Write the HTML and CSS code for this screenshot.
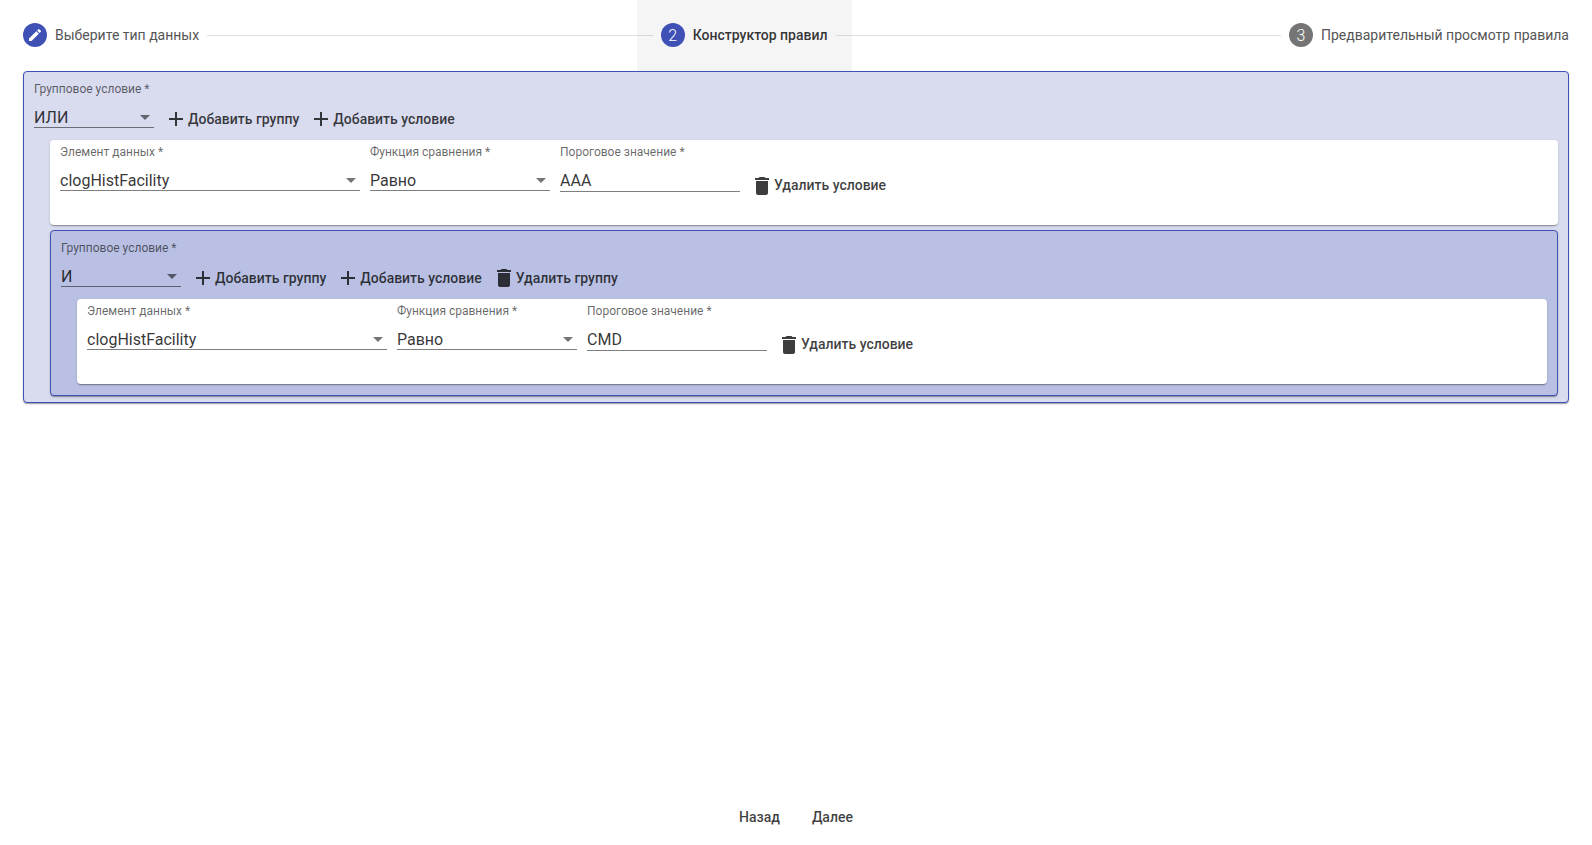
FILE: index.html
```html
<!DOCTYPE html>
<html lang="ru">
<head>
<meta charset="utf-8">
<title>Конструктор правил</title>
<link rel="stylesheet" href="styles.css">
</head>
<body>
<div class="page">
  <header class="stepper">
    <div class="step">
      <span class="step-icon"><svg viewBox="0 0 24 24" class="pencil"><path d="M3 17.25V21h3.75L17.81 9.94l-3.75-3.75L3 17.25zM20.71 7.04a1 1 0 0 0 0-1.41l-2.34-2.34a1 1 0 0 0-1.41 0l-1.83 1.83 3.75 3.75 1.83-1.83z"/></svg></span>
      <span class="step-label">Выберите тип данных</span>
    </div>
    <div class="step-line"></div>
    <div class="step step-active">
      <span class="step-icon">2</span>
      <span class="step-label step-label-strong">Конструктор правил</span>
    </div>
    <div class="step-line"></div>
    <div class="step">
      <span class="step-icon step-icon-idle">3</span>
      <span class="step-label">Предварительный просмотр правила</span>
    </div>
  </header>

  <main class="content">
    <section class="group group-outer">
      <div class="group-head">
        <div class="field field-group">
          <span class="field-label">Групповое условие *</span>
          <div class="field-value"><span>ИЛИ</span><i class="arrow"></i></div>
        </div>
        <button class="action"><svg viewBox="0 0 24 24" class="icon"><path d="M19 13h-6v6h-2v-6H5v-2h6V5h2v6h6v2z"/></svg>Добавить группу</button>
        <button class="action"><svg viewBox="0 0 24 24" class="icon"><path d="M19 13h-6v6h-2v-6H5v-2h6V5h2v6h6v2z"/></svg>Добавить условие</button>
      </div>
      <div class="group-body">
        <div class="rule">
          <div class="field field-wide">
            <span class="field-label">Элемент данных *</span>
            <div class="field-value"><span>clogHistFacility</span><i class="arrow"></i></div>
          </div>
          <div class="field field-mid">
            <span class="field-label">Функция сравнения *</span>
            <div class="field-value"><span>Равно</span><i class="arrow"></i></div>
          </div>
          <div class="field field-mid field-last">
            <span class="field-label">Пороговое значение *</span>
            <div class="field-value field-input"><span>AAA</span></div>
          </div>
          <button class="action action-rule"><svg viewBox="0 0 24 24" class="icon"><path d="M6 19c0 1.1.9 2 2 2h8c1.1 0 2-.9 2-2V7H6v12zM19 4h-3.5l-1-1h-5l-1 1H5v2h14V4z"/></svg>Удалить условие</button>
        </div>

        <section class="group group-inner">
          <div class="group-head">
            <div class="field field-group">
              <span class="field-label">Групповое условие *</span>
              <div class="field-value"><span>И</span><i class="arrow"></i></div>
            </div>
            <button class="action"><svg viewBox="0 0 24 24" class="icon"><path d="M19 13h-6v6h-2v-6H5v-2h6V5h2v6h6v2z"/></svg>Добавить группу</button>
            <button class="action"><svg viewBox="0 0 24 24" class="icon"><path d="M19 13h-6v6h-2v-6H5v-2h6V5h2v6h6v2z"/></svg>Добавить условие</button>
            <button class="action"><svg viewBox="0 0 24 24" class="icon"><path d="M6 19c0 1.1.9 2 2 2h8c1.1 0 2-.9 2-2V7H6v12zM19 4h-3.5l-1-1h-5l-1 1H5v2h14V4z"/></svg>Удалить группу</button>
          </div>
          <div class="group-body">
            <div class="rule">
              <div class="field field-wide">
                <span class="field-label">Элемент данных *</span>
                <div class="field-value"><span>clogHistFacility</span><i class="arrow"></i></div>
              </div>
              <div class="field field-mid">
                <span class="field-label">Функция сравнения *</span>
                <div class="field-value"><span>Равно</span><i class="arrow"></i></div>
              </div>
              <div class="field field-mid field-last">
                <span class="field-label">Пороговое значение *</span>
                <div class="field-value field-input"><span>CMD</span></div>
              </div>
              <button class="action action-rule"><svg viewBox="0 0 24 24" class="icon"><path d="M6 19c0 1.1.9 2 2 2h8c1.1 0 2-.9 2-2V7H6v12zM19 4h-3.5l-1-1h-5l-1 1H5v2h14V4z"/></svg>Удалить условие</button>
            </div>
          </div>
        </section>
      </div>
    </section>
  </main>

  <footer class="nav">
    <button class="nav-btn">Назад</button>
    <button class="nav-btn">Далее</button>
  </footer>
</div>
</body>
</html>
```
FILE: styles.css
```css
* { box-sizing: border-box; }
html, body { margin: 0; padding: 0; background: #fff; }
body { font-family: Roboto, "Noto Sans", sans-serif; color: rgba(0,0,0,.87); }

.page { height: 845px; display: flex; flex-direction: column; overflow: hidden; }

/* Stepper */
.stepper { display: flex; align-items: center; height: 71px; flex: none; margin: 0 -1px; }
.step { display: flex; align-items: center; height: 71px; padding: 0 24px 1px; flex: none; }
.step-active { background: #f5f5f5; }
.step-icon {
  width: 24px; height: 24px; border-radius: 50%; background: #3f51b5; color: #fff;
  display: flex; align-items: center; justify-content: center;
  font-size: 16px; font-weight: 300; margin-right: 8px; flex: none;
}
.step-icon-idle { background: rgba(0,0,0,.54); }
.pencil { width: 16px; height: 16px; fill: #fff; }
.step-label { font-size: 14px; white-space: nowrap; color: #555; }
.step-label-strong { font-weight: 500; color: rgba(0,0,0,.8); }
.step-line { flex: 1 1 auto; min-width: 32px; border-top: 1px solid rgba(0,0,0,.12); margin: 0 -16px; position: relative; z-index: 1; }

/* Rule builder */
.content { flex: 1 1 auto; padding: 0 23px; }
.group {
  border: 1px solid #3f51b5; border-radius: 4px;
  box-shadow: 0 2px 1px -1px rgba(0,0,0,.2), 0 1px 1px 0 rgba(0,0,0,.14), 0 1px 3px 0 rgba(0,0,0,.12);
}
.group-outer { background: #d9dbef; padding: 10px 10px 6px 10px; }
.group-inner { background: #b9c0e3; padding: 10px 10px 11px 10px; margin-top: 5px; }
.group-head { display: flex; align-items: flex-end; height: 47px; }
.group-body { padding: 11px 0 0 16px; display: flex; flex-direction: column; }

.field { display: flex; flex-direction: column; flex: none; }
.field-group { width: 120px; margin: 0 5px 1px 0; }
.field-wide { width: 300px; margin-right: 10px; }
.field-mid { width: 180px; margin-right: 10px; }
.field-last { margin-right: 5px; }
.field-label { font-size: 12px; line-height: 14px; color: rgba(0,0,0,.6); white-space: nowrap; }
.field-value {
  display: flex; align-items: center; justify-content: space-between;
  font-size: 16px; line-height: 19px; margin-top: 12px;
  border-bottom: 1px solid rgba(0,0,0,.5); height: 20px; color: rgba(0,0,0,.8);
}
.field-input { height: 21px; padding-bottom: 2px; }
.arrow {
  width: 0; height: 0; margin-right: 4px;
  border-left: 5px solid transparent; border-right: 5px solid transparent;
  border-top: 5px solid rgba(0,0,0,.54);
}

.action {
  display: inline-flex; align-items: center; height: 24px; padding: 0 5px;
  border: 0; background: none; cursor: pointer;
  font: 500 14px Roboto, sans-serif; color: rgba(0,0,0,.76); white-space: nowrap;
}
.icon { width: 24px; height: 24px; fill: currentColor; flex: none; }
.group-head .action { margin-bottom: -2px; }

.rule {
  background: #fff; border-radius: 4px; height: 85px; padding: 5px 10px 0 10px;
  display: flex; align-items: flex-start;
  box-shadow: 0 2px 1px -1px rgba(0,0,0,.2), 0 1px 1px 0 rgba(0,0,0,.14), 0 1px 3px 0 rgba(0,0,0,.12);
}
.action-rule { margin-top: 28px; }
.action-rule .icon { margin-top: 2px; }

/* Footer nav */
.nav { flex: none; display: flex; justify-content: center; padding-bottom: 10px; }
.nav-btn {
  height: 36px; padding: 0 16px; border: 0; background: none; cursor: pointer;
  font: 500 14px Roboto, sans-serif; color: rgba(0,0,0,.76);
}
```
